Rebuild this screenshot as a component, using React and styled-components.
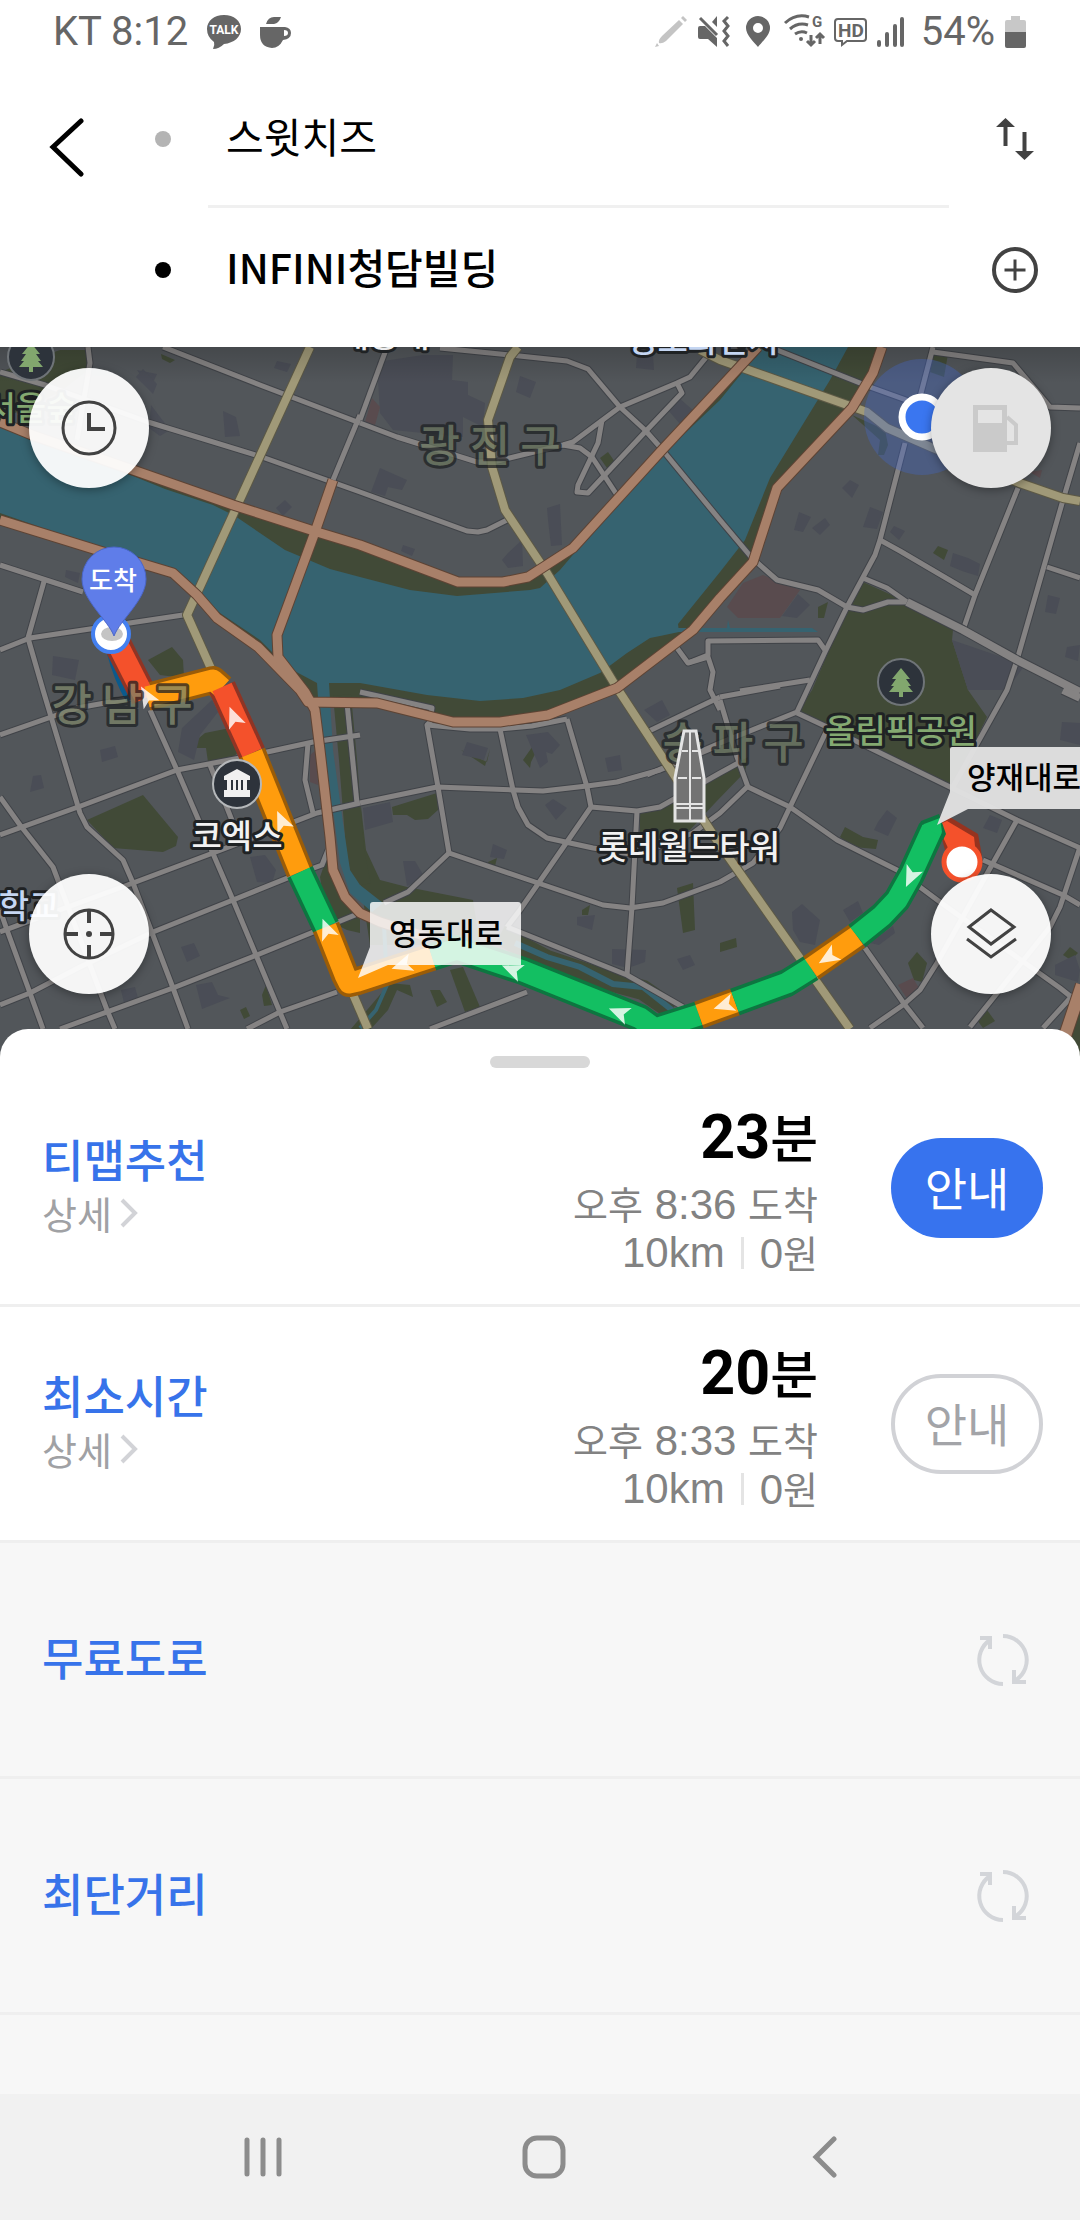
import React from 'react';
import styled, { createGlobalStyle, css } from 'styled-components';

const GlobalStyle = createGlobalStyle`
  * {
    box-sizing: border-box;
  }

  body {
    margin: 0;
    background: #f7f7f7;
    font-family: 'Noto Sans CJK KR', sans-serif;
  }

  button,
  input {
    margin: 0;
    padding: 0;
    border: none;
    background: none;
    font-family: inherit;
    color: inherit;
  }

  button {
    cursor: pointer;
  }

  svg {
    display: block;
    flex-shrink: 0;
  }
`;

const Screen = styled.div`
  display: flex;
  flex-direction: column;
  min-height: 100vh;
`;

/* status bar */

const StatusBar = styled.div`
  display: flex;
  align-items: center;
  justify-content: space-between;
  height: 64px;
  padding: 0 54px 0 53px;
  background: #fff;
  color: #666;
  font-family: Roboto, sans-serif;
  font-size: 40px;
  line-height: 48px;

  svg {
    overflow: visible;
  }
`;

const StatusGroup = styled.div`
  display: flex;
  align-items: center;
  gap: ${(props) => props.$gap}px;
`;

/* search header */

const Header = styled.header`
  display: flex;
  align-items: flex-start;
  padding: 13px 29px 15px 32px;
  background: #fff;
`;

const BackButton = styled.button`
  display: flex;
  align-items: center;
  justify-content: center;
  width: 70px;
  height: 140px;
`;

const Places = styled.div`
  flex: 1;
  min-width: 0;
  padding-left: 53px;
`;

const PlaceRow = styled.label`
  display: flex;
  align-items: center;
  height: 124px;
`;

const Dot = styled.span`
  width: 16px;
  height: 16px;
  border-radius: 50%;
  background: ${(props) => props.$color};
  flex-shrink: 0;
`;

const PlaceInput = styled.input`
  flex: 1;
  min-width: 0;
  margin-left: 55px;
  height: 80px;
  padding-bottom: 8px;
  font-size: 41px;
  font-weight: ${(props) => props.$weight};
  color: #000;
  outline: none;
`;

const IconButton = styled.button`
  display: flex;
  align-items: center;
  justify-content: center;
  width: 72px;
  height: 72px;
`;

const PlaceDivider = styled.div`
  height: 3px;
  margin: 4px 102px 0 53px;
  background: #f0f0f0;
`;

/* map */

const MapArea = styled.section`
  position: relative;
  height: 710px;
  margin-bottom: -28px;
  overflow: hidden;
  background: #52565a;

  > svg {
    width: 100%;
    height: 100%;
  }
`;

const MapControls = styled.div`
  position: absolute;
  inset: 0;
  display: grid;
  grid-template-columns: auto auto;
  justify-content: space-between;
  align-content: space-between;
  padding: 21px 29px 63px;
`;

const RoundButton = styled.button`
  width: 120px;
  height: 120px;
  border-radius: 50%;
  background: rgba(255, 255, 255, 0.94);
  box-shadow: 0 2px 10px rgba(0, 0, 0, 0.35);

  &:disabled {
    background: #e4e4e4;
    cursor: default;
  }
`;

const MapLabel = styled.text`
  font-family: 'Noto Sans CJK KR', sans-serif;
  font-size: ${(props) => props.$size || 33}px;
  font-weight: ${(props) => props.$weight || 500};
  text-anchor: middle;
  paint-order: stroke;
  stroke: #1f2224;
  stroke-width: 6px;
  stroke-linejoin: round;
`;

const MarkerText = styled.text`
  font-family: 'Noto Sans CJK KR', sans-serif;
  font-size: ${(props) => props.$size}px;
  font-weight: 500;
`;

/* route sheet */

const Sheet = styled.main`
  position: relative;
  flex: 1;
  border-radius: 28px 28px 0 0;
  background: linear-gradient(#fff 300px, #f7f7f7 300px);
  overflow: hidden;
`;

const GripArea = styled.div`
  display: flex;
  justify-content: center;
  height: 42px;
  padding-top: 27px;
`;

const Grip = styled.span`
  width: 100px;
  height: 12px;
  border-radius: 6px;
  background: #d8d8d8;
`;

const RouteList = styled.ul`
  margin: 0;
  padding: 0;
  list-style: none;
`;

const RouteRow = styled.li`
  display: flex;
  align-items: center;
  height: 236px;
  padding: 0 37px 0 42px;
  border-bottom: 3px solid #efefef;
  background: ${(props) => (props.$pending ? '#f7f7f7' : '#fff')};
`;

const RouteName = styled.div`
  flex: 1;
  padding-bottom: 6px;
`;

const RouteTitle = styled.h2`
  margin: 0;
  color: #3773ea;
  font-size: 45px;
  font-weight: 500;
  line-height: 56px;
`;

const DetailButton = styled.button`
  display: flex;
  align-items: center;
  gap: 8px;
  color: #a0a1a4;
  font-size: 38px;
  line-height: 52px;
`;

const Summary = styled.div`
  display: flex;
  flex-direction: column;
  align-items: flex-end;
  padding-top: 6px;
  color: #828282;
  font-size: 38px;
  line-height: 47px;
`;

const Duration = styled.strong`
  display: flex;
  align-items: baseline;
  margin-bottom: 10px;
  color: #000;
  font-size: 52px;
  font-weight: 500;
  line-height: 64px;

  b {
    font-family: Roboto, sans-serif;
    font-size: 61px;
    font-weight: 700;
  }
`;

const Num = styled.span`
  font-family: 'Liberation Sans', sans-serif;
  font-size: 42px;
  white-space: pre;
`;

const FareLine = styled.div`
  display: flex;
  align-items: center;
`;

const Bar = styled.i`
  width: 3px;
  height: 32px;
  margin: 0 16px;
  background: #e4e4e4;
`;

const GuideButton = styled.button`
  width: 152px;
  height: 100px;
  margin-left: 73px;
  padding-bottom: 4px;
  border-radius: 50px;
  font-size: 46px;
  line-height: 60px;
  ${(props) =>
    props.$primary
      ? css`
          background: #3773ee;
          color: #fff;
        `
      : css`
          border: 4px solid #d1d2d6;
          color: #a3a4a8;
        `}
`;

const RetryButton = styled.button`
  display: flex;
  align-items: center;
  justify-content: center;
  width: 80px;
  height: 80px;
`;

/* android navigation */

const NavBar = styled.nav`
  display: grid;
  grid-template-columns: repeat(3, 1fr);
  height: 126px;
  padding: 0 114px 0 122px;
  background: #f1f1f1;
`;

const NavButton = styled.button`
  display: flex;
  align-items: center;
  justify-content: center;
`;

const MAJOR_PARKS =
  '0,422 32,435 133,470 233,505 317,532 360,545 458,582 503,582 528,577 573,548 662,450 720,388 758,347 882,347 873,373 852,408 777,488 753,562 720,598 693,630 617,688 548,715 500,722 453,722 377,703 308,702 258,647 217,618 173,573 100,551 0,520';

const RIVER =
  '0,427 30,440 133,476 165,489 213,505 235,516 285,550 330,569 360,577 410,590 457,596 530,590 540,588 560,570 600,523 660,457 720,400 763,347 848,347 830,380 770,478 745,540 720,572 678,624 679,632 660,636 650,638 627,653 600,673 560,690 523,698 480,701 427,695 360,683 317,683 287,667 260,640 217,611 200,593 173,568 100,548 0,513';

const PARKS = [
  '0,372 60,350 87,350 88,370 60,392 0,420',
  '600,458 608,452 615,462 607,468',
  '161,354 175,360 170,363 162,359',
  '87,820 143,795 178,837 176,846 163,852 113,848',
  '193,743 205,733 230,728 240,750 226,765 208,762 206,748 193,748',
  '148,660 172,647 183,660 184,678 160,675',
  '863,582 907,602 953,630 952,640 968,690 987,717 953,787 827,727 797,713 812,690 847,608',
  '640,813 660,808 720,773 748,757 745,772 715,803 690,830 640,845',
  '392,807 437,793 438,810 428,819 415,820 407,815 393,815',
  '361,807 366,850 380,880 407,887 473,900 480,945 370,945 360,880',
  '450,970 463,967 480,1007 465,1012',
  '430,990 440,990 447,1002 437,1007',
  '677,888 693,883 695,930 683,933',
  '461,750 487,762 490,749 485,766',
  '523,760 535,743 538,748 531,762 530,768',
  '840,837 845,827 863,837 878,840 876,849 853,847',
  '908,963 917,952 927,963 922,982 914,980',
  '977,1020 987,1010 995,1021 983,1028',
  '1063,955 1070,947 1078,953 1071,960',
  '1065,1060 1080,1000 1080,1060',
  '320,877 327,857 337,890 360,917 360,933 347,930 327,920',
  '390,983 410,985 413,997 397,990 388,1010 370,1030 350,1030',
  '240,1010 246,1007 250,1016 244,1019',
  '262,995 266,985 272,1005 264,1006',
  '933,355 948,354 944,377 930,372',
  '933,553 938,546 948,550 944,560',
  '818,607 828,602 824,618 818,618',
  '852,415 885,430 888,445 884,455 878,455 880,440',
  '582,910 590,905 588,915 582,915',
  '488,862 497,858 495,866 487,864',
  '720,943 736,938 737,947 720,952',
];

const BUILDINGS = [
  '377,362 423,355 453,355 452,380 468,382 468,395 485,403 483,427 463,417 463,437 393,430 380,413',
  '520,376 536,382 530,398 516,392',
  '380,468 407,480 402,490 388,487 385,496 371,492',
  '547,508 560,504 562,545 551,546 548,520',
  '508,553 522,540 523,566 508,568 502,560',
  '403,545 415,549 412,556 401,551',
  '637,355 653,355 654,370 636,368',
  '678,397 695,412 680,424 668,410',
  '137,370 157,374 150,389',
  '136,377 143,369 157,384 153,394',
  '223,411 236,417 240,436 225,437',
  '151,405 170,430 160,436 149,428',
  '277,361 291,364 287,372 274,368',
  '276,508 285,500 292,507 283,516',
  '842,488 850,480 859,485 852,498',
  '799,512 811,517 803,532 794,530',
  '812,528 825,518 830,525 820,535',
  '870,507 883,512 877,529 863,527',
  '890,532 894,526 905,531 899,540',
  '953,553 968,558 980,564 978,576 962,571 950,566',
  '782,616 798,594 810,605 797,618',
  '1048,595 1060,598 1056,614 1045,612',
  '1067,647 1080,645 1078,661 1065,657',
  '952,640 1025,665 1007,690 968,690',
  '53,656 79,660 75,680 52,675',
  '66,570 80,573 78,583 65,577',
  '100,750 115,746 118,757 102,762',
  '33,776 41,775 44,788 30,792',
  '182,728 212,700 218,712 200,735 194,760 178,752',
  '250,857 265,855 276,870 272,883 257,882',
  '181,947 194,943 200,956 187,962',
  '196,985 212,982 218,995 230,998 202,1009',
  '121,990 135,987 138,998 124,1003',
  '363,808 390,802 393,822 365,830',
  '467,742 488,748 484,760 462,755',
  '526,735 548,732 560,745 552,754 546,752 548,762 540,768',
  '605,758 620,755 622,770 608,772',
  '545,805 553,799 567,808 556,820',
  '493,844 507,850 504,859 490,857',
  '403,861 415,861 425,878 407,886',
  '577,917 595,915 592,930 577,925',
  '612,949 646,950 645,962 628,968 612,964',
  '677,959 690,955 695,965 683,970',
  '792,912 802,904 820,920 815,945 800,942 793,930',
  '843,910 858,901 863,913 850,922',
  '870,943 893,926 895,933 879,945',
  '878,822 887,810 897,818 888,836 874,830',
  '983,828 990,815 1002,820 997,833',
  '1062,722 1080,723 1080,745 1060,740',
  '1055,965 1075,955 1080,970 1078,982 1055,975',
  '644,710 662,700 670,715 657,722',
];

const CLAY = [
  '372,398 380,407 375,425 365,422',
  '727,607 743,583 763,575 800,590 780,618 738,618',
  '310,755 316,750 318,785 310,782',
  '898,985 913,978 920,990 908,1000',
  '1030,472 1042,470 1040,478',
];

const STREETS = [
  '163,347 260,385 360,423',
  '88,347 90,363 77,440',
  '0,372 45,385 148,422 262,457 360,492 467,531 478,532 487,530 507,520',
  '360,415 333,480',
  '387,347 360,420',
  '360,423 397,437 477,462 493,462 563,445 573,442 620,407 677,383 690,377 708,355',
  '440,348 510,355 567,361 588,369 620,407 645,430 660,447 720,520 752,558 777,580 818,590 847,607 863,610 888,602 907,602',
  '677,383 682,393 645,432 588,493 577,492 578,485 598,443 602,420',
  '563,445 580,448 592,457 617,495',
  '777,350 870,387 920,405',
  '933,347 920,397',
  '905,443 880,540 875,555 847,607 825,652 797,712 720,743 647,775',
  '933,352 1013,363 1050,407 1080,408',
  '880,540 900,551 975,595',
  '863,578 887,588 907,602',
  '1018,488 975,595 963,630',
  '1080,443 1063,500 1017,660 1007,690 953,787',
  '1047,567 1080,578',
  '677,648 688,663 708,655 708,641 818,640 825,650',
  '688,663 708,657 713,672 710,690 720,710',
  '720,700 737,757 748,787 790,807 837,840 897,870 940,902 1060,988 1080,1004',
  '740,691 810,680',
  '720,697 780,686',
  '647,732 720,697',
  '360,692 432,708 430,722 427,725 438,787 449,853',
  '427,725 470,729 500,729 532,726 567,719',
  '500,729 513,790 518,807 528,825 547,838 593,848 637,855 693,833 720,813 748,786',
  '567,719 587,787 591,807 520,910 507,927',
  '360,803 437,787 543,791 587,786 617,782 660,770 720,745',
  '591,807 637,811 660,807 720,773 740,762',
  '637,811 632,907 627,975',
  '449,853 538,883 603,905 630,908 663,903 720,882 753,863 780,828 790,807 827,730',
  '449,853 408,892 384,903',
  '507,927 627,975 683,1007',
  '430,1029 527,992',
  '797,713 827,727 950,787 1017,820 1080,848',
  '1017,820 993,863 937,963 920,990 903,1005 870,1028',
  '865,948 905,1005 923,1028',
  '983,860 1063,895 1080,905',
  '1080,847 1060,907 1050,927 970,1027',
  '1073,995 1043,1028',
  '0,565 83,592',
  '45,578 28,638 43,690 80,813 87,827 123,860 133,883 173,988 188,1029',
  '0,650 30,638 183,615',
  '0,735 77,708 150,695',
  '150,710 177,770 233,900 287,1029',
  '0,835 78,807 177,770 240,758 313,742 360,735',
  '0,797 20,825 53,867 107,1010 115,1029',
  '0,932 133,883 213,853 317,813 360,803',
  '0,1005 30,993 80,967 153,932 233,900 300,873 322,865 328,850',
  '60,1029 173,988 257,955 360,913',
  '0,910 7,930 30,993 43,1029',
  '247,1029 280,1012 337,992',
  '210,765 233,823',
  '308,743 305,780 313,813',
  '347,703 357,803',
];

const WIDE_STREETS = [
  '907,602 963,630 1017,660 1080,692',
  '1063,690 1080,698',
];

const YELLOW_ROADS = [
  '310,347 187,615 213,673',
  '518,347 510,357 488,420 492,467 505,510 547,573 617,688 720,845 850,1029',
  '700,350 720,360 867,412 887,428 933,448 1017,482 1063,498 1080,501',
  '349,985 368,1029',
];

const ORANGE_ROADS = [
  '0,422 32,435 133,470 233,505 317,532 360,545 458,582 503,582 528,577 573,548 662,450 720,388 758,347',
  '0,520 100,551 173,573 197,595 217,618 258,647 300,690 308,702 377,703 453,722 500,722 548,715 617,688 693,630 720,598 753,562 777,488 852,408 873,373 882,347',
  '333,480 315,532 277,635 278,657 305,692 315,710 320,750 330,837 333,870 345,897 360,913 380,922 427,937',
];

// traffic state of each stretch of the selected route
const ROUTE = [
  { color: '#f4512b', edge: '#8f3424', points: '118,645 145,698' },
  { color: '#ff9c0d', edge: '#9a5c08', points: '147,697 213,680 222,688' },
  { color: '#f4512b', edge: '#8f3424', points: '222,687 252,753' },
  { color: '#ff9c0d', edge: '#9a5c08', points: '252,753 300,872' },
  { color: '#13bf62', edge: '#0d7640', points: '300,872 326,927' },
  { color: '#ff9c0d', edge: '#9a5c08', points: '326,927 345,975 349,983 358,981 432,957' },
  { color: '#13bf62', edge: '#0d7640', points: '432,957 457,949 523,971 640,1018 655,1029 699,1015' },
  { color: '#ff9c0d', edge: '#9a5c08', points: '699,1015 735,1002' },
  { color: '#13bf62', edge: '#0d7640', points: '735,1002 787,983 811,968' },
  { color: '#ff9c0d', edge: '#9a5c08', points: '811,968 857,936' },
  { color: '#13bf62', edge: '#0d7640', points: '857,936 882,916 897,900 911,875 932,829' },
];

const HEADINGS = [
  [147, 697, -30],
  [234, 718, -22],
  [282, 822, -24],
  [327, 930, -22],
  [403, 965, -108],
  [513, 970, -68],
  [620, 1013, -68],
  [725, 1005, -108],
  [829, 957, -122],
  [911, 876, -155],
];

function Roads({ lines, width, color, edge }) {
  return (
    <g fill="none" strokeLinejoin="round">
      {lines.map((line) => (
        <polyline key={line} points={line} stroke={edge} strokeWidth={width + 2} />
      ))}
      {lines.map((line) => (
        <polyline key={line} points={line} stroke={color} strokeWidth={width} />
      ))}
    </g>
  );
}

function TreePoi({ x, y }) {
  return (
    <g transform={`translate(${x} ${y})`}>
      <circle r="23" fill="#2d333b" stroke="#6f7478" strokeWidth="2" />
      <path
        d="M0 -14 L9 -3 L5 -3 L10 4 L7 4 L12 10 L2 10 L2 15 L-2 15 L-2 10 L-12 10 L-7 4 L-10 4 L-5 -3 L-9 -3 Z"
        fill="#82a76e"
      />
    </g>
  );
}

function MapDrawing() {
  return (
    <svg viewBox="0 347 1080 710" preserveAspectRatio="xMidYMid slice" role="img" aria-label="경로 지도">
      <defs>
        <linearGradient id="topShade" x1="0" y1="0" x2="0" y2="1">
          <stop offset="0" stopColor="#000" stopOpacity="0.16" />
          <stop offset="1" stopColor="#000" stopOpacity="0" />
        </linearGradient>
      </defs>
      <rect x="0" y="347" width="1080" height="710" fill="#52565a" />
      <polygon points={MAJOR_PARKS} fill="#414a37" />
      <polygon points={RIVER} fill="#366370" />
      {PARKS.map((p) => (
        <polygon key={p} points={p} fill="#414a37" />
      ))}
      {BUILDINGS.map((p) => (
        <polygon key={p} points={p} fill="#4a4d56" />
      ))}
      {CLAY.map((p) => (
        <polygon key={p} points={p} fill="#594b4e" />
      ))}
      <path d="M678 628 H727 L728 620 L730 628 H812 L818 632 H678 Z" fill="#366370" />
      <polyline points="342,695 348,760 355,850 362,885" fill="none" stroke="#414a37" strokeWidth="18" />
      <path d="M317 683 L329 683 L333 750 L343 823 L350 870 L360 885 L383 903 L372 912 L350 893 L340 863 L334 817 L322 757 Z" fill="#366370" />
      <polyline points="500,935 547,960 613,982 643,990 672,1010" fill="none" stroke="#414a37" strokeWidth="20" />
      <polyline points="515,943 547,957 580,967 613,984 643,987 672,1010" fill="none" stroke="#366370" strokeWidth="6" />
      <polyline points="384,925 387,985 376,1010 360,1028" fill="none" stroke="#366370" strokeWidth="4" />

      <Roads lines={STREETS} width={5} color="#858383" edge="#404348" />
      <Roads lines={WIDE_STREETS} width={8} color="#858383" edge="#404348" />
      <Roads lines={YELLOW_ROADS} width={8} color="#a09978" edge="#5d5945" />
      <Roads lines={ORANGE_ROADS} width={9} color="#a88069" edge="#5e4334" />
      <Roads lines={['1082,985 1062,1045']} width={12} color="#a88069" edge="#5e4334" />
      <rect x="0" y="347" width="1080" height="36" fill="url(#topShade)" />

      <MapLabel x="384" y="347" fill="#eeeeee">세종대</MapLabel>
      <MapLabel x="703" y="352" fill="#c5d6f2">정보화단지</MapLabel>
      <MapLabel x="31" y="420" fill="#84a971">서울숲</MapLabel>
      <MapLabel x="29" y="918" fill="#c5d6f2">학교</MapLabel>
      <TreePoi x={31} y={357} />
      <TreePoi x={901} y={682} />
      <g opacity="0.75">
        <MapLabel x="490" y="462" $size={44} fill="#6b765f">광 진 구</MapLabel>
        <MapLabel x="733" y="759" $size={44} fill="#6b765f">송 파 구</MapLabel>
      </g>

      {/* route */}
      <path d="M110 650 Q118 680 130 700" fill="none" stroke="#0b5a8c" strokeWidth="8" />
      <path d="M939 817 L948 816 L978 834 L982 856 L945 850 L941 835 Z" fill="#96331f" />
      <path d="M940 824 L947 821 L974 837 L976 855 L948 848 L941 833 Z" fill="#f4512b" />
      <g fill="none" strokeLinejoin="round">
        {ROUTE.map((part) => (
          <polyline key={part.points} points={part.points} stroke={part.edge} strokeWidth="28" />
        ))}
        <path d="M919 825 L921 821 L939 814 L946 834 L943 840 Z" fill="#0d7640" />
        {ROUTE.map((part) => (
          <polyline key={part.points} points={part.points} stroke={part.color} strokeWidth="21" />
        ))}
        <path d="M922 826 L924 824 L940 818 L942 832 L940 836 Z" fill="#13bf62" />
      </g>
      {HEADINGS.map(([x, y, angle]) => (
        <path
          key={x}
          d="M0 -12 L9 9 L0 4 L-9 9 Z"
          transform={`translate(${x} ${y}) rotate(${angle})`}
          fill="#fff"
          fillOpacity="0.82"
        />
      ))}
      <g opacity="0.75">
        <MapLabel x="122" y="721" $size={44} fill="#7c8468">강 남 구</MapLabel>
      </g>

      {/* start and end */}
      <circle cx="962" cy="862" r="18" fill="#fff" stroke="#f4512b" strokeWidth="5" />
      <circle cx="111" cy="634" r="18" fill="#fff" stroke="#4480f0" strokeWidth="4" />
      <ellipse cx="112" cy="634" rx="11" ry="7" fill="#c4c4c4" />
      <path
        d="M114 636 C108 620 82 600 82 579 A32 32 0 0 1 146 579 C146 600 120 620 114 636 Z"
        fill="#5f7de9"
        stroke="#4a66c8"
        strokeWidth="1"
      />
      <MarkerText x="113" y="590" $size={26} fill="#fff" textAnchor="middle">도착</MarkerText>

      {/* landmarks */}
      <g transform="translate(237 784)">
        <circle r="24" fill="#2d333b" stroke="#b5b8ba" strokeWidth="2" />
        <path
          d="M0 -15 L13 -8 L13 -4 L10 -4 L10 6 L13 6 L13 13 L-13 13 L-13 6 L-10 6 L-10 -4 L-13 -4 L-13 -8 Z"
          fill="#f0f0f0"
        />
        <path d="M-5 -4 V6 M0 -4 V6 M5 -4 V6" stroke="#2d333b" strokeWidth="2" />
      </g>
      <MapLabel x="237" y="848" fill="#f2f2f2">코엑스</MapLabel>
      <MapLabel x="901" y="743" fill="#84a971">올림픽공원</MapLabel>
      <MapLabel x="689" y="859" fill="#f2f2f2">롯데월드타워</MapLabel>
      <g fill="none" stroke="#e4e4e4" strokeWidth="2">
        <path d="M684 731 L696 731 L704 778 L704 821 L675 821 L675 778 Z" fill="#737373" strokeWidth="3" />
        <path d="M690 731 V821 M682 751 H688 M692 751 H699 M678 778 H687 M692 778 H701 M675 804 H704 M675 808 H704" />
      </g>

      {/* road name bubbles */}
      <path
        d="M373 902 H518 Q521 902 521 905 V965 H388 L358 978 L370 947 V905 Q370 902 373 902 Z"
        fill="#fff"
        fillOpacity="0.82"
      />
      <MarkerText x="446" y="945" $size={31} fill="#000" textAnchor="middle">영동대로</MarkerText>
      <path d="M952 747 H1080 V809 H968 L937 825 L950 792 V749 Q950 747 952 747 Z" fill="#e2e2e2" fillOpacity="0.96" />
      <MarkerText x="967" y="789" $size={31} fill="#000">양재대로</MarkerText>

      {/* current position */}
      <circle cx="922" cy="417" r="58" fill="#4266c8" fillOpacity="0.36" />
      <circle cx="922" cy="417" r="20" fill="#3a76f0" stroke="#fff" strokeWidth="7" />
    </svg>
  );
}

const routes = [
  { name: '티맵추천', minutes: 23, arrival: '8:36', primary: true },
  { name: '최소시간', minutes: 20, arrival: '8:33' },
];

const pendingRoutes = ['무료도로', '최단거리'];

function StatusIcons() {
  return (
    <>
      <svg width="33" height="34" viewBox="0 0 33 34" fill="#c4c4c4">
        <path d="M24 5 L28 9 L11 26 Q7 29 4 28 Q3 25 7 21 Z" />
        <path d="M26 3 L28 1 L32 5 L30 7 Z" />
        <path d="M0 32 L2 28 L4 31 Z" />
      </svg>
      <svg width="33" height="34" viewBox="0 0 33 34" fill="#666">
        <path d="M0 13 Q0 11 2 11 H7 L19 23 V32 L10 24 H2 Q0 24 0 22 Z" />
        <path d="M2 3 L19 20" stroke="#666" strokeWidth="3" />
        <path d="M14 7 L19 1 V12 Z" />
        <path d="M30 2 L26 6 L30 11 L26 16 L30 21 L26 26 L30 31" fill="none" stroke="#666" strokeWidth="3" />
      </svg>
      <svg width="33" height="34" viewBox="0 0 33 34" fill="#666">
        <path
          fillRule="evenodd"
          d="M17 1 A12 12 0 0 1 29 13 C29 20 21 27 17 32 C13 27 5 20 5 13 A12 12 0 0 1 17 1 Z M17 8 A5 5 0 1 0 17 18 A5 5 0 1 0 17 8 Z"
        />
      </svg>
      <svg width="40" height="34" viewBox="0 0 40 34" fill="none" stroke="#666" strokeWidth="3">
        <path d="M1 8 Q12 -2 25 2" />
        <path d="M6 14 Q14 7 24 10" />
        <path d="M11 19 Q17 15 23 18" />
        <circle cx="17" cy="24" r="2" fill="#666" stroke="none" />
        <text x="28" y="12" fontSize="15" fontWeight="700" fill="#666" stroke="none">G</text>
        <path d="M27 20 V30 M23 26 L27 30 L31 26 M36 29 V19 M32 23 L36 19 L40 23" />
      </svg>
      <svg width="33" height="34" viewBox="0 0 33 34" fill="none" stroke="#666" strokeWidth="2">
        <path d="M4 4 H29 Q32 4 32 7 V23 Q32 26 29 26 H13 L8 30 V26 H4 Q1 26 1 23 V7 Q1 4 4 4 Z" />
        <text x="4" y="22" fontSize="19" fontWeight="700" fill="#666" stroke="none">HD</text>
      </svg>
      <svg width="34" height="34" viewBox="0 0 34 34" stroke="#666" strokeWidth="4" strokeLinecap="round">
        <path d="M2 27 V30 M10 19 V30 M18 11 V30 M25 4 V30" />
      </svg>
    </>
  );
}

function RetryIcon() {
  return (
    <svg width="56" height="56" viewBox="0 0 56 56" fill="none" stroke="#d3d5d9" strokeWidth="4">
      <path d="M28 52 A24 24 0 0 1 15 8" />
      <path d="M5 6 H15 V17" />
      <path d="M28 4 A24 24 0 0 1 41 48" />
      <path d="M51 50 H39 V38" />
    </svg>
  );
}

function App() {
  return (
    <Screen>
      <GlobalStyle />
      <StatusBar>
        <StatusGroup $gap={18}>
          <span>KT 8:12</span>
          <svg width="36" height="36" viewBox="0 0 36 36" fill="#666">
            <path d="M18 1 C28 1 35 7 35 15 C35 23 28 29 18 30 Q13 35 7 35 Q9 31 8 28 Q1 23 1 15 C1 7 8 1 18 1 Z" />
            <text x="18" y="20" fontSize="12" fontWeight="700" textAnchor="middle" fill="#fff">TALK</text>
          </svg>
          <svg width="32" height="34" viewBox="0 0 32 34" fill="#666">
            <path d="M6 9 Q8 2 14 2 H21 Q19 8 14 9 Z" />
            <path
              fillRule="evenodd"
              d="M0 12 H25 Q31 13 31 18 Q31 24 23 25 Q19 33 12 33 Q0 32 0 20 Z M24 15 V21 Q28 21 28 18 Q28 15 24 15 Z"
            />
          </svg>
        </StatusGroup>
        <StatusGroup $gap={10}>
          <StatusIcons />
          <span>54%</span>
          <svg width="21" height="34" viewBox="0 0 21 34">
            <path d="M6 1 H15 V5 H19 Q21 5 21 7 V17 H0 V7 Q0 5 2 5 H6 Z" fill="#c8c8c8" />
            <path d="M0 17 H21 V31 Q21 33 19 33 H2 Q0 33 0 31 Z" fill="#666" />
          </svg>
        </StatusGroup>
      </StatusBar>

      <Header>
        <BackButton aria-label="뒤로">
          <svg width="36" height="60" viewBox="0 0 36 60" fill="none" stroke="#000" strokeWidth="5" strokeLinecap="round">
            <path d="M32 4 L4 30 L32 57" />
          </svg>
        </BackButton>
        <Places>
          <PlaceRow>
            <Dot $color="#b4b4b4" />
            <PlaceInput $weight={400} aria-label="출발지" defaultValue="스윗치즈" />
            <IconButton aria-label="출발지와 도착지 바꾸기">
              <svg width="38" height="42" viewBox="0 0 38 42">
                <path d="M9.500 6 V28 M28.500 14 V36" stroke="#424242" strokeWidth="4" />
                <path d="M0 9 L9.500 0 L19 9 Z M19 33 L28.500 42 L38 33 Z" fill="#424242" />
              </svg>
            </IconButton>
          </PlaceRow>
          <PlaceDivider />
          <PlaceRow>
            <Dot $color="#000" />
            <PlaceInput $weight={500} aria-label="도착지" defaultValue="INFINI청담빌딩" />
            <IconButton aria-label="경유지 추가">
              <svg width="48" height="48" viewBox="0 0 48 48" fill="none" stroke="#424242">
                <circle cx="24" cy="24" r="21" strokeWidth="4" />
                <path d="M13.500 24 H34.500 M24 13.500 V34.500" strokeWidth="3" />
              </svg>
            </IconButton>
          </PlaceRow>
        </Places>
      </Header>

      <MapArea>
        <MapDrawing />
        <MapControls>
          <RoundButton aria-label="출발 시간">
            <svg width="120" height="120" viewBox="0 0 120 120" fill="none" stroke="#424242">
              <circle cx="60" cy="60" r="26" strokeWidth="3" />
              <path d="M60 45 V61 H76" strokeWidth="4" />
            </svg>
          </RoundButton>
          <RoundButton aria-label="주유소" disabled>
            <svg width="120" height="120" viewBox="0 0 120 120">
              <path fillRule="evenodd" d="M42 37 H76 V84 H42 Z M47 42 V55 H71 V42 Z" fill="#cacaca" />
              <path d="M76 49 L85 57 V75 H76" fill="none" stroke="#cacaca" strokeWidth="4" />
            </svg>
          </RoundButton>
          <RoundButton aria-label="현재 위치">
            <svg width="120" height="120" viewBox="0 0 120 120" fill="none" stroke="#424242">
              <circle cx="60" cy="60" r="24" strokeWidth="3" />
              <path d="M60 36 V49 M60 71 V84 M36 60 H49 M71 60 H84" strokeWidth="4" />
              <circle cx="60" cy="60" r="3" fill="#424242" stroke="none" />
            </svg>
          </RoundButton>
          <RoundButton aria-label="지도 레이어">
            <svg width="120" height="120" viewBox="0 0 120 120" fill="none" stroke="#424242" strokeWidth="3">
              <path d="M60 36 L83 53 L60 70 L38 53 Z" />
              <path d="M36 65 L60 83 L85 65" />
            </svg>
          </RoundButton>
        </MapControls>
      </MapArea>

      <Sheet>
        <GripArea>
          <Grip />
        </GripArea>
        <RouteList>
          {routes.map((route) => (
            <RouteRow key={route.name}>
              <RouteName>
                <RouteTitle>{route.name}</RouteTitle>
                <DetailButton>
                  상세
                  <svg width="18" height="30" viewBox="0 0 18 30" fill="none" stroke="#d2d3d7" strokeWidth="4">
                    <path d="M2 2 L15 15 L2 28" />
                  </svg>
                </DetailButton>
              </RouteName>
              <Summary>
                <Duration>
                  <b>{route.minutes}</b>분
                </Duration>
                <div>
                  오후<Num>{` ${route.arrival} `}</Num>도착
                </div>
                <FareLine>
                  <Num>10km</Num>
                  <Bar />
                  <span>
                    <Num>0</Num>원
                  </span>
                </FareLine>
              </Summary>
              <GuideButton $primary={route.primary}>안내</GuideButton>
            </RouteRow>
          ))}
          {pendingRoutes.map((name) => (
            <RouteRow key={name} $pending>
              <RouteName>
                <RouteTitle>{name}</RouteTitle>
              </RouteName>
              <RetryButton aria-label={`${name} 다시 검색`}>
                <RetryIcon />
              </RetryButton>
            </RouteRow>
          ))}
        </RouteList>
      </Sheet>

      <NavBar>
        <NavButton aria-label="최근 앱">
          <svg width="40" height="42" viewBox="0 0 40 42" stroke="#8c8c8c" strokeWidth="5" strokeLinecap="round">
            <path d="M4 4 V38 M20 4 V38 M36 4 V38" />
          </svg>
        </NavButton>
        <NavButton aria-label="홈">
          <svg width="44" height="44" viewBox="0 0 44 44" fill="none" stroke="#8c8c8c" strokeWidth="5">
            <rect x="3" y="3" width="38" height="38" rx="12" />
          </svg>
        </NavButton>
        <NavButton aria-label="뒤로 가기">
          <svg width="26" height="42" viewBox="0 0 26 42" fill="none" stroke="#8c8c8c" strokeWidth="5" strokeLinecap="round">
            <path d="M22 3 L4 21 L22 39" />
          </svg>
        </NavButton>
      </NavBar>
    </Screen>
  );
}

export default App;
